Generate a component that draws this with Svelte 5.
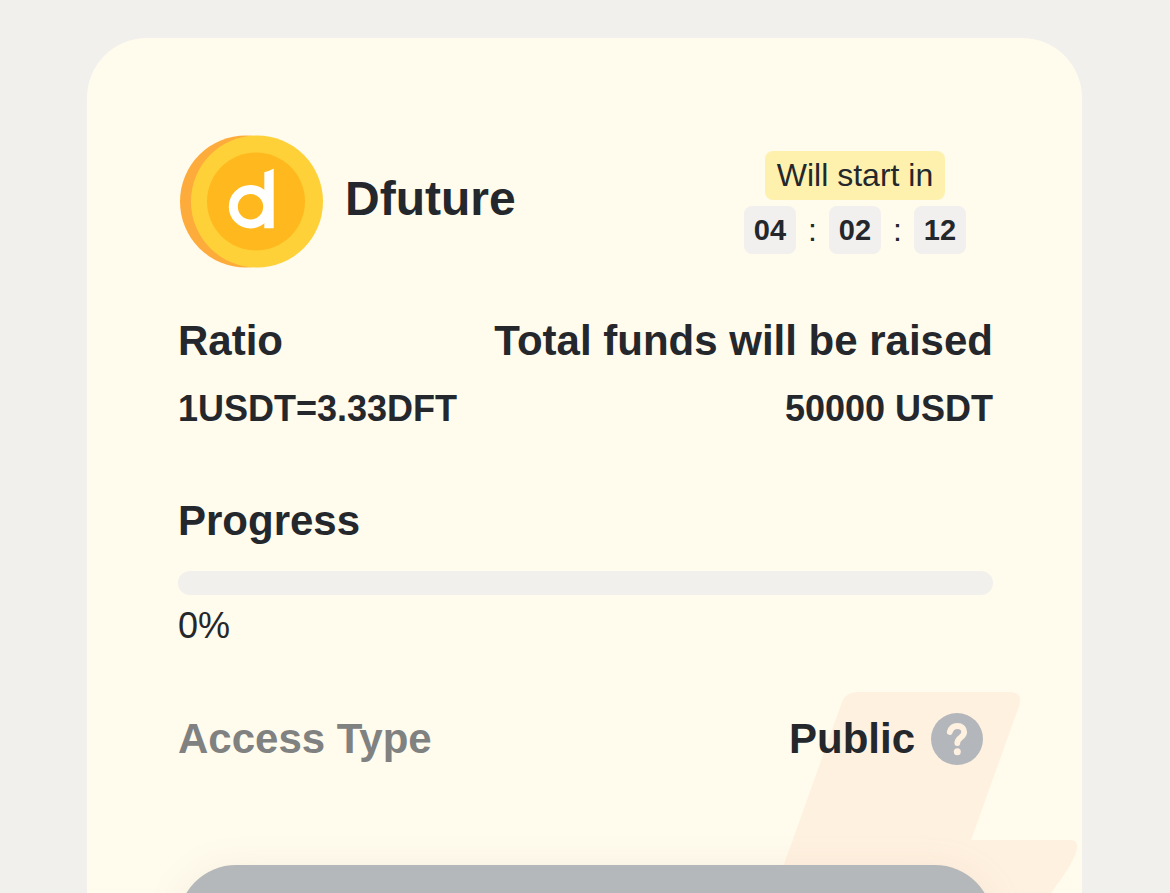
<script lang="ts">
  const pool = {
    name: 'Dfuture',
    ratio: '1USDT=3.33DFT',
    total: '50000 USDT',
    progress: 0,
    access: 'Public',
  };

  let countdown = $state(['04', '02', '12']);
</script>

<main class="page">
  <section class="card">
    <svg class="bolt" viewBox="0 0 300 260" aria-hidden="true">
      <path d="M76 0H228Q241 0 237 14L189 148H288Q299 148 293 163C286 180 270 200 225 260H-30L0 178L60 10Q64 0 76 0Z" fill="#fff1e0" />
    </svg>

    <header class="head">
      <svg class="coin" viewBox="0 0 144 134" aria-hidden="true">
        <circle cx="66" cy="66.5" r="66" fill="#fdac3c" />
        <circle cx="77" cy="66.5" r="66" fill="#ffd138" />
        <circle cx="76" cy="66.5" r="49" fill="#ffb91e" />
        <circle cx="70.5" cy="71.7" r="17.2" fill="none" stroke="#fff" stroke-width="9" />
        <path d="M84.3 37.2Q89 36.4 93.7 33.6V93.2H84.3Z" fill="#fff" />
      </svg>
      <h1 class="name">{pool.name}</h1>
      <div class="timer">
        <div class="timer-label">Will start in</div>
        <div class="clock">
          {#each countdown as part, i}
            {#if i > 0}<span class="colon">:</span>{/if}
            <span class="digits">{part}</span>
          {/each}
        </div>
      </div>
    </header>

    <div class="row titles">
      <h2>Ratio</h2>
      <h2>Total funds will be raised</h2>
    </div>
    <div class="row values">
      <span>{pool.ratio}</span>
      <span>{pool.total}</span>
    </div>

    <h2 class="progress-title" id="progress-title">Progress</h2>
    <div class="bar" role="progressbar" aria-labelledby="progress-title" aria-valuenow={pool.progress}>
      <div class="bar-fill" style="width: {pool.progress}%"></div>
    </div>
    <div class="percent">{pool.progress}%</div>

    <div class="row access">
      <span class="access-label">Access Type</span>
      <div class="access-value">
        <span>{pool.access}</span>
        <button class="help" aria-label="About access type">
          <svg viewBox="0 0 52 52" aria-hidden="true">
            <circle cx="26" cy="26" r="26" fill="#b3b7bb" />
            <path d="M18.8 19C20 14.8 22.6 13 26.3 13C30.6 13 33.2 15.4 33.2 19C33.2 24.6 26.3 24.4 26.3 30" fill="none" stroke="#fff1e0" stroke-width="5.8" stroke-linecap="round" />
            <circle cx="26.3" cy="38.8" r="3.5" fill="#fff1e0" />
          </svg>
        </button>
      </div>
    </div>

    <button class="join" aria-label="Join" disabled></button>
  </section>
</main>

<style>
  :global(body) {
    margin: 0;
    background: #f1f0ed;
  }

  .page {
    box-sizing: border-box;
    height: 100vh;
    overflow: hidden;
    padding: 38px 88px 0 87px;
    font-family: Helvetica, "Liberation Sans", Arial, sans-serif;
    color: #24272c;
  }

  .card {
    position: relative;
    overflow: hidden;
    padding: 97px 89px 90px 91px;
    border-radius: 60px;
    background: #fffbed;
  }

  .bolt {
    position: absolute;
    top: 654px;
    right: 0;
    width: 300px;
    height: 260px;
  }

  h1, h2 { margin: 0; }

  h2 {
    font-size: 42px;
    line-height: 48px;
  }

  /* header */
  .head {
    display: flex;
    align-items: center;
  }

  .coin {
    width: 144px;
    height: 134px;
    margin-left: 2px;
    flex-shrink: 0;
  }

  .name {
    margin-left: 21px;
    padding-bottom: 6px;
    font-size: 48px;
    line-height: 56px;
  }

  .timer {
    display: flex;
    flex-direction: column;
    align-items: center;
    gap: 6px;
    margin-left: auto;
    margin-right: 27px;
  }

  .timer-label {
    padding: 0 12px;
    border-radius: 8px;
    background: #fef1ae;
    font-size: 32px;
    line-height: 49px;
  }

  .clock {
    display: flex;
    align-items: center;
  }

  .digits {
    width: 52px;
    border-radius: 8px;
    background: #f2f0ee;
    font-size: 29px;
    font-weight: 700;
    line-height: 48px;
    text-align: center;
  }

  .colon {
    width: 33px;
    font-size: 32px;
    line-height: 48px;
    text-align: center;
  }

  /* rows */
  .row {
    display: flex;
    align-items: center;
    justify-content: space-between;
  }

  .titles { margin-top: 48px; }

  .values {
    margin-top: 24px;
    font-size: 36px;
    font-weight: 700;
    line-height: 40px;
  }

  .progress-title { margin-top: 68px; }

  .bar {
    height: 24px;
    margin-top: 26px;
    border-radius: 12px;
    background: #f1f0ed;
    overflow: hidden;
  }

  .bar-fill {
    height: 100%;
    background: #fed02f;
  }

  .percent {
    margin-top: 11px;
    font-size: 36px;
    line-height: 40px;
  }

  .access {
    position: relative;
    margin-top: 67px;
    font-size: 42px;
    font-weight: 700;
    line-height: 50px;
  }

  .access-label { color: #808181; }

  .access-value {
    display: flex;
    align-items: center;
    gap: 16px;
    margin-right: 10px;
  }

  .help {
    width: 52px;
    height: 52px;
    padding: 0;
    border: none;
    background: none;
    cursor: pointer;
  }
  .help svg { display: block; }

  .join {
    position: relative;
    display: block;
    width: 100%;
    height: 116px;
    margin-top: 100px;
    border: none;
    border-radius: 58px;
    background: #b4b8bb;
    box-shadow: 0 4px 36px rgba(180, 150, 120, 0.13);
  }
</style>
